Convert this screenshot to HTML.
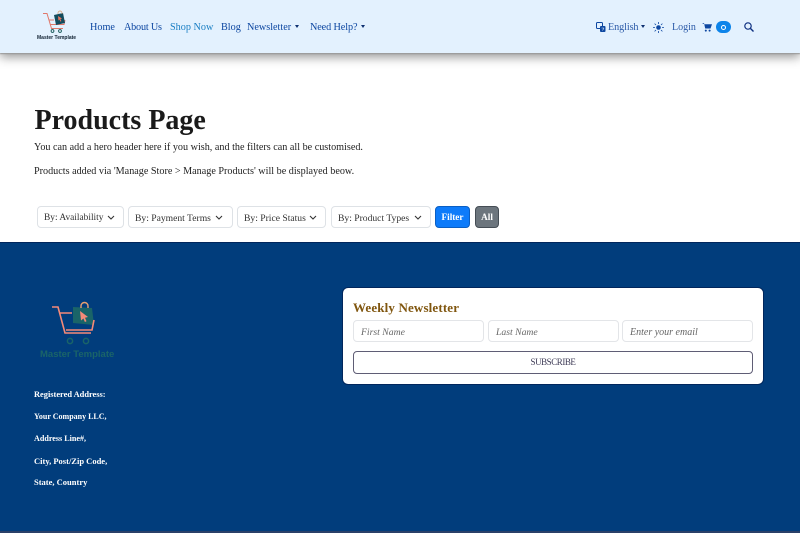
<!DOCTYPE html>
<html lang="en">
<head>
<meta charset="utf-8">
<title>Products Page</title>
<style>
html,body{margin:0;padding:0;width:800px;height:533px;overflow:hidden;background:#fff;font-family:"Liberation Serif",serif;}
.a{position:absolute;white-space:nowrap;}
#nav{position:absolute;left:0;top:0;width:800px;height:53px;background:#e3f1fe;box-shadow:0 1px 1px #999,0 4px 10px rgba(0,0,0,.42);}
.n{position:absolute;top:21px;font-size:10.2px;line-height:14px;color:#0d47a1;white-space:nowrap;}
.car{display:inline-block;border-top:3px solid currentColor;border-left:2.5px solid transparent;border-right:2.5px solid transparent;position:absolute;}
.f{position:absolute;top:206px;height:22px;box-sizing:border-box;border:1px solid #dee2e6;border-radius:4px;background:#fff;font-size:9.6px;line-height:21px;color:#333;padding-left:6px;padding-top:.5px;white-space:nowrap;}
.f svg{position:absolute;right:8px;top:8px;}
.b{position:absolute;top:206px;height:22px;box-sizing:border-box;border-radius:4px;color:#fff;text-align:center;font-size:9.2px;line-height:21px;font-weight:bold;}
#foot{position:absolute;left:0;top:242px;width:800px;height:291px;background:#013d7c;border-top:1px solid #01265c;box-sizing:border-box;border-bottom:2px solid #2a4068;}
.ad{position:absolute;left:34px;font-size:8.5px;line-height:12px;color:#fff;white-space:nowrap;font-weight:bold;}
.i{position:absolute;top:320px;height:22px;box-sizing:border-box;border:1px solid #e3e5e8;border-radius:4px;background:#fff;font-size:9.7px;line-height:21px;padding-top:.5px;font-style:italic;color:#666;padding-left:7px;}
</style>
</head>
<body>
<div id="nav"></div>

<svg class="a" style="left:40px;top:10px" width="30" height="26" viewBox="40 10 30 26">
<path d="M43 13.5h4l4.5 15h11.5M49 20h5M65 20l-1 4.5H50.5" fill="none" stroke="#e0786a" stroke-width="1"/>
<path d="M54 15l9-2 2 10-9 2z" fill="#134c5e"/>
<path d="M58 14v-1a2 2 0 0 1 4 0v1" fill="none" stroke="#d89868" stroke-width=".7"/>
<path d="M58 16l4 2.5-1.6.6 1 2-1 .5-1-2-1 1z" fill="#e8765f"/>
<circle cx="52.5" cy="31" r="1.4" fill="none" stroke="#155" stroke-width=".9"/>
<circle cx="60" cy="31" r="1.4" fill="none" stroke="#155" stroke-width=".9"/>
</svg>
<div class="a" style="left:37px;top:34.5px;font:bold 5px/7px 'Liberation Sans',sans-serif;color:#123">Master Template</div>

<div class="n" style="left:90px">Home</div>
<div class="n" style="left:124px;letter-spacing:-.2px">About Us</div>
<div class="n" style="left:170px;color:#1a7fc4">Shop Now</div>
<div class="n" style="left:221px">Blog</div>
<div class="n" style="left:247px">Newsletter</div>
<span class="car" style="left:295px;top:25px;color:#0d2f70"></span>
<div class="n" style="left:310px;letter-spacing:-.1px">Need Help?</div>
<span class="car" style="left:361px;top:25px;color:#0d2f70"></span>

<svg class="a" style="left:596px;top:22px" width="10" height="11" viewBox="0 0 10 11">
<rect x=".5" y=".5" width="6" height="6" rx="1" fill="none" stroke="#0d47a1"/>
<rect x="4" y="4" width="5.5" height="6" rx="1" fill="#0d47a1"/>
<path d="M5.5 6h2.5M6.5 8.5l1.5-2.5" stroke="#e3f1fe" stroke-width=".6" fill="none"/>
</svg>
<div class="n" style="left:608px;color:#2b5aa8;letter-spacing:-.1px">English</div>
<span class="car" style="left:641px;top:25px;color:#0d2f70"></span>
<svg class="a" style="left:653px;top:22px" width="11" height="11" viewBox="0 0 11 11">
<circle cx="5.5" cy="5.5" r="2.3" fill="#0d47a1"/>
<path d="M5.5 0v2M5.5 9v2M0 5.5h2M9 5.5h2M1.6 1.6l1.4 1.4M8 8l1.4 1.4M1.6 9.4L3 8M8 3l1.4-1.4" stroke="#0d47a1" stroke-width=".8"/>
</svg>
<div class="n" style="left:672px;color:#2b5aa8;font-size:10px">Login</div>
<svg class="a" style="left:702px;top:22px" width="10" height="10" viewBox="0 0 10 10">
<path d="M0 1h2l1.2 5.5h5.3L10 2.2H2.4z" fill="#0d47a1"/>
<circle cx="3.8" cy="8.6" r="1" fill="#0d47a1"/><circle cx="7.6" cy="8.6" r="1" fill="#0d47a1"/>
</svg>
<div class="a" style="left:716px;top:21px;width:15px;height:12px;border-radius:6px;background:#0d84ea"></div>
<div class="a" style="left:721px;top:24.5px;width:5px;height:5px;box-sizing:border-box;border-radius:50%;border:1.5px solid #fff"></div>
<svg class="a" style="left:744px;top:22px" width="10" height="10" viewBox="0 0 10 10">
<circle cx="4" cy="4" r="3.2" fill="none" stroke="#0d2f80" stroke-width="1.2"/>
<path d="M6.5 6.5L9.5 9.5" stroke="#0d2f80" stroke-width="1.4"/>
</svg>

<div class="a" style="left:34.5px;top:103.5px;font-size:28px;line-height:33px;font-weight:bold;color:#1a1a1a">Products Page</div>
<div class="a" style="left:34px;top:140.5px;font-size:10.16px;line-height:14px;color:#222">You can add a hero header here if you wish, and the filters can all be customised.</div>
<div class="a" style="left:34px;top:164.5px;font-size:10.16px;line-height:14px;color:#222">Products added via 'Manage Store &gt; Manage Products' will be displayed beow.</div>

<div class="f" style="left:37px;width:87px;font-size:9.4px">By: Availability<svg width="8" height="6" viewBox="0 0 8 6"><path d="M1 1l3 3 3-3" fill="none" stroke="#333" stroke-width="1.1"/></svg></div>
<div class="f" style="left:128px;width:105px">By: Payment Terms<svg style="right:9px" width="8" height="6" viewBox="0 0 8 6"><path d="M1 1l3 3 3-3" fill="none" stroke="#333" stroke-width="1.1"/></svg></div>
<div class="f" style="left:237px;width:89px">By: Price Status<svg width="8" height="6" viewBox="0 0 8 6"><path d="M1 1l3 3 3-3" fill="none" stroke="#333" stroke-width="1.1"/></svg></div>
<div class="f" style="left:331px;width:100px">By: Product Types<svg width="8" height="6" viewBox="0 0 8 6"><path d="M1 1l3 3 3-3" fill="none" stroke="#333" stroke-width="1.1"/></svg></div>
<div class="b" style="left:435px;width:35px;background:#0d7bfa;border:1px solid #0a5fc4">Filter</div>
<div class="b" style="left:475px;width:24px;background:#6c757d;border:1px solid #454d55">All</div>

<div id="foot"></div>

<svg class="a" style="left:50px;top:300px" width="50" height="48" viewBox="50 300 50 48">
<path d="M73 307l19 1 2 17-21-2z" fill="#1a6468"/>
<path d="M81 308v-2a3.5 3.5 0 0 1 7 0v2" fill="none" stroke="#e8a070" stroke-width="1.4"/>
<path d="M52 307h6l7 26h26M59 313h13M94 320l-2 10H66" fill="none" stroke="#f58a78" stroke-width="1.6"/>
<path d="M80 311l8 6-3 .8 1.5 3.5-1.6.7-1.5-3.5-2.4 2z" fill="#f58a78"/>
<circle cx="70" cy="341" r="2.6" fill="none" stroke="#1a6468" stroke-width="1.5"/>
<circle cx="86" cy="341" r="2.6" fill="none" stroke="#1a6468" stroke-width="1.5"/>
</svg>
<div class="a" style="left:40px;top:348px;font:bold 9.5px/13px 'Liberation Sans',sans-serif;color:#1a6468">Master Template</div>

<div class="ad" style="top:389px;font-size:8.4px">Registered Address:</div>
<div class="ad" style="top:411px;font-size:8px">Your Company LLC,</div>
<div class="ad" style="top:433px;font-size:8.1px">Address Line#,</div>
<div class="ad" style="top:454.5px">City, Post/Zip Code,</div>
<div class="ad" style="top:476px">State, Country</div>

<div class="a" style="left:343px;top:288px;width:420px;height:96px;box-sizing:border-box;background:#fff;border-radius:5px;box-shadow:0 0 0 1px #01265c"></div>
<div class="a" style="left:353px;top:300px;font-size:13px;line-height:15px;font-weight:bold;color:#80560f;letter-spacing:.15px">Weekly Newsletter</div>
<div class="i" style="left:353px;width:131px">First Name</div>
<div class="i" style="left:488px;width:131px">Last Name</div>
<div class="i" style="left:622px;width:131px;font-size:10px">Enter your email</div>
<div class="a" style="left:353px;top:351px;width:400px;height:23px;box-sizing:border-box;border:1px solid #5f5d75;border-radius:4px;background:#fff;text-align:center;font-size:9px;line-height:21px;color:#3d3a55;letter-spacing:-.45px">SUBSCRIBE</div>
</body>
</html>
